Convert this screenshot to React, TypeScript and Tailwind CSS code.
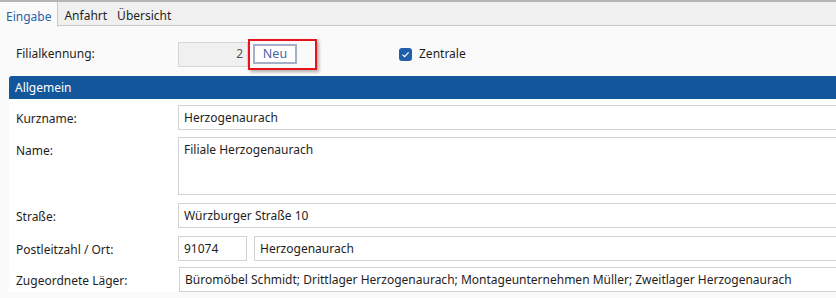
import React from 'react';

const font = { fontFamily: '"Noto Sans", "Open Sans", sans-serif' };

function Field({ value, className = '' }: { value: string; className?: string }) {
  return (
    <div
      className={`flex h-[25px] items-center border border-[#d2d2d2] bg-white px-[5px] text-[12px] text-[#1e1e1e] ${className}`}
    >
      {value}
    </div>
  );
}

function Row({ label, children, className = '' }: { label: string; children: React.ReactNode; className?: string }) {
  return (
    <div className={`flex ${className}`}>
      <div className="w-[169px] shrink-0 pl-[7px] pt-[5px] text-[12px] text-[#1e1e1e]">{label}</div>
      <div className="flex min-w-0 flex-1 gap-[7px]">{children}</div>
    </div>
  );
}

export default function App() {
  return (
    <div className="h-[298px] w-[836px] overflow-hidden bg-[#fafafa]" style={font}>
      <div className="flex h-[26px] border-t-2 border-b border-t-[#b4b4b4] border-b-[#cacaca] bg-[#f0f0f0] text-[12px]">
        <div className="-mb-px flex h-[25px] items-center border-r border-[#cacaca] bg-[#fafafa] px-[6px] pt-[5px] text-[#2a62a8]">
          Eingabe
        </div>
        <div className="flex items-center pl-[6px] pr-[10px] pt-[5px] text-[#1e1e1e]">Anfahrt</div>
        <div className="flex items-center pt-[5px] text-[#1e1e1e]">Übersicht</div>
      </div>

      <div className="flex h-[50px] items-center pt-[6px] text-[12px] text-[#1e1e1e]">
        <div className="w-[178px] shrink-0 pl-[16px]">Filialkennung:</div>
        <div className="flex h-[25px] w-[70px] items-center justify-end border border-[#d6d6d6] bg-[#f0f0f0] pr-[4px] text-[#555]">
          2
        </div>
        <div className="flex h-[31px] w-[69px] items-center border-2 border-[#e8141c] pl-[3px] shadow-[2px_2px_3px_rgba(0,0,0,0.3)]">
          <div className="flex h-[20px] w-[44px] items-center justify-center border-2 border-[#a6afc8] bg-white text-[12.5px] text-[#4c64a6]">
            Neu
          </div>
        </div>
        <div className="ml-[82px] flex items-center gap-[7px]">
          <div className="flex h-[13px] w-[13px] items-center justify-center rounded-[3px] bg-[#1e5eab]">
            <svg width="9" height="9" viewBox="0 0 9 9" fill="none">
              <path d="M1.5 4.6 L3.6 6.6 L7.6 2.4" stroke="white" strokeWidth="1.3" />
            </svg>
          </div>
          <span>Zentrale</span>
        </div>
      </div>

      <div className="ml-[9px] w-[840px] bg-white">
        <div className="flex h-[23px] items-center rounded-tl-[3px] bg-[#14569c] pl-[6px] text-[12px] text-white">
          Allgemein
        </div>
        <div className="flex flex-col gap-[7px] pt-[6px]">
          <Row label="Kurzname:">
            <Field value="Herzogenaurach" className="flex-1" />
          </Row>
          <Row label="Name:">
            <div className="h-[58px] flex-1 border border-[#d2d2d2] bg-white px-[5px] pt-[3px] text-[12px] text-[#1e1e1e]">
              Filiale Herzogenaurach
            </div>
          </Row>
          <Row label="Straße:" className="mt-px">
            <Field value="Würzburger Straße 10" className="flex-1" />
          </Row>
          <Row label="Postleitzahl / Ort:" className="mt-px">
            <Field value="91074" className="w-[69px] shrink-0" />
            <Field value="Herzogenaurach" className="flex-1" />
          </Row>
          <Row label="Zugeordnete Läger:" className="-mt-px">
            <Field
              value="Büromöbel Schmidt; Drittlager Herzogenaurach; Montageunternehmen Müller; Zweitlager Herzogenaurach"
              className="ml-px flex-1"
            />
          </Row>
        </div>
      </div>
    </div>
  );
}
